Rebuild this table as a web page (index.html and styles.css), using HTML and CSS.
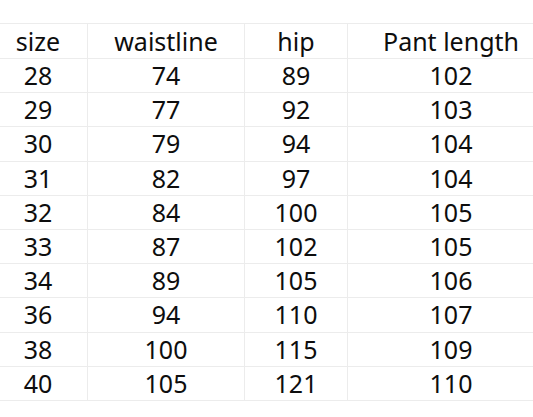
FILE: index.html
```html
<!DOCTYPE html>
<html>
<head>
<meta charset="utf-8">
<link rel="stylesheet" href="styles.css">
</head>
<body>
<table class="size-table">
  <colgroup>
    <col class="c1"><col class="c2"><col class="c3"><col class="c4">
  </colgroup>
  <thead>
    <tr class="head"><th>size</th><th>waistline</th><th>hip</th><th>Pant length</th></tr>
  </thead>
  <tbody>
    <tr><td>28</td><td>74</td><td>89</td><td>102</td></tr>
    <tr><td>29</td><td>77</td><td>92</td><td>103</td></tr>
    <tr><td>30</td><td>79</td><td>94</td><td>104</td></tr>
    <tr><td>31</td><td>82</td><td>97</td><td>104</td></tr>
    <tr><td>32</td><td>84</td><td>100</td><td>105</td></tr>
    <tr><td>33</td><td>87</td><td>102</td><td>105</td></tr>
    <tr><td>34</td><td>89</td><td>105</td><td>106</td></tr>
    <tr><td>36</td><td>94</td><td>110</td><td>107</td></tr>
    <tr><td>38</td><td>100</td><td>115</td><td>109</td></tr>
    <tr><td>40</td><td>105</td><td>121</td><td>110</td></tr>
  </tbody>
</table>
</body>
</html>
```
FILE: styles.css
```css
html, body {
  margin: 0;
  padding: 0;
  background: #ffffff;
  overflow: hidden;
}
body {
  width: 533px;
  height: 417px;
  padding-top: 23px;
  box-sizing: border-box;
}
.size-table {
  margin-left: -12px;
  border-collapse: collapse;
  table-layout: fixed;
  width: 566px;
  font-family: "Noto Sans", "Open Sans", sans-serif;
  font-size: 25px;
  color: #0d0d0d;
}
.c1 { width: 99px; }
.c2 { width: 157px; }
.c3 { width: 103px; }
.c4 { width: 207px; }
.size-table th,
.size-table td {
  border: 1px solid #ececec;
  text-align: center;
  padding: 0;
  font-weight: normal;
  line-height: 1;
}
.size-table .head th {
  height: 34px;
}
.size-table td {
  height: 33.2px;
}
```
